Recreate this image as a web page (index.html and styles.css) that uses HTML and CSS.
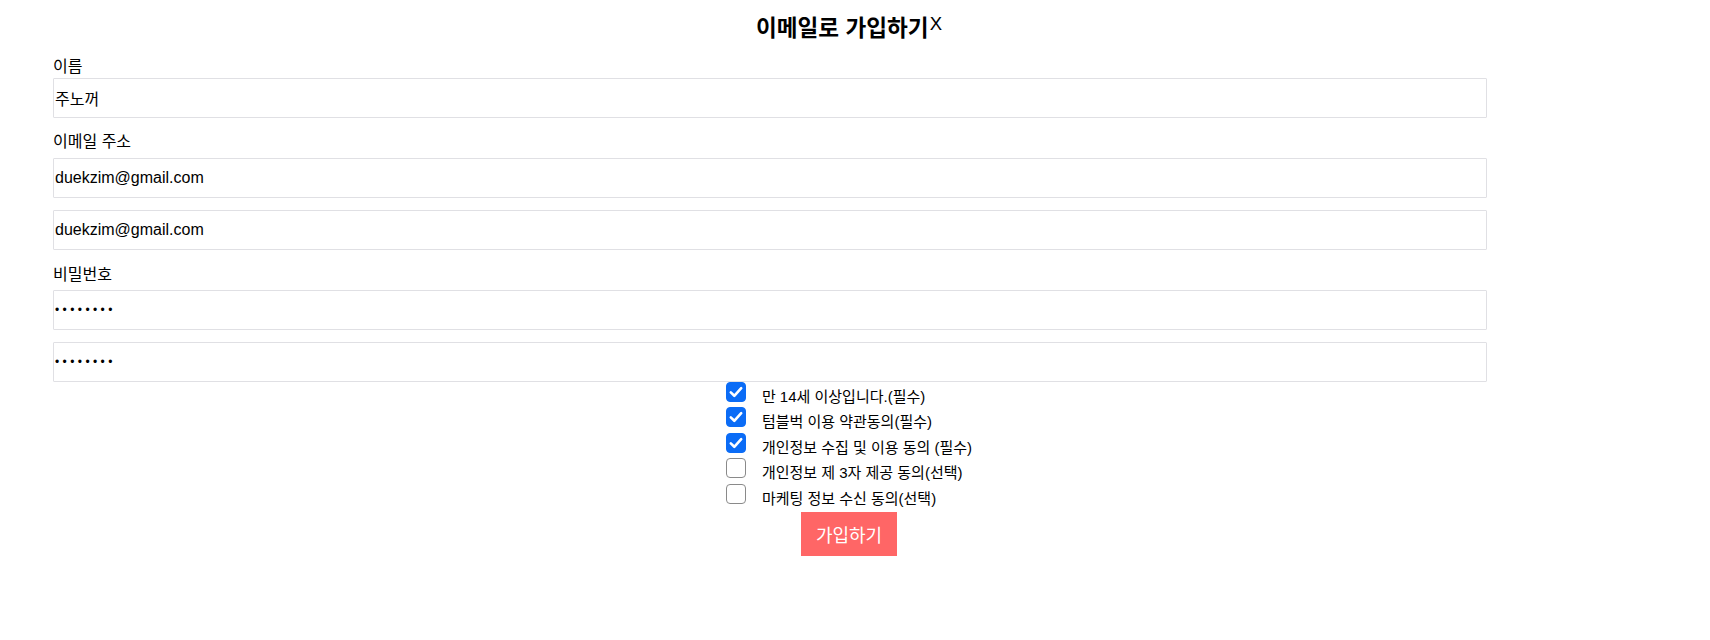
FILE: index.html
```html
<!DOCTYPE html>
<html lang="ko">
<head>
<meta charset="utf-8">
<title>이메일로 가입하기</title>
<link rel="stylesheet" href="styles.css">
</head>
<body>
<div class="page">
  <h2 class="title"><span class="title-text">이메일로 가입하기</span><span class="close">X</span></h2>
  <form class="form">
    <label class="label label-name" for="name">이름</label>
    <input class="field f-name" id="name" type="text" value="주노꺼">
    <label class="label label-email" for="email">이메일 주소</label>
    <input class="field f-email" id="email" type="text" value="duekzim@gmail.com">
    <input class="field f-email2" type="text" value="duekzim@gmail.com">
    <label class="label label-pw" for="pw">비밀번호</label>
    <input class="field pw f-pw" id="pw" type="password" value="12345678">
    <input class="field pw f-pw2" type="password" value="12345678">
  </form>
  <div class="checks">
    <label class="check-row"><input class="cb" type="checkbox" checked><span class="check-text">만 14세 이상입니다.(필수)</span></label>
    <label class="check-row"><input class="cb" type="checkbox" checked><span class="check-text">텀블벅 이용 약관동의(필수)</span></label>
    <label class="check-row"><input class="cb" type="checkbox" checked><span class="check-text">개인정보 수집 및 이용 동의 (필수)</span></label>
    <label class="check-row"><input class="cb" type="checkbox"><span class="check-text">개인정보 제 3자 제공 동의(선택)</span></label>
    <label class="check-row"><input class="cb" type="checkbox"><span class="check-text">마케팅 정보 수신 동의(선택)</span></label>
  </div>
  <div class="submit-wrap">
    <button class="submit" type="button">가입하기</button>
  </div>
</div>
</body>
</html>
```
FILE: styles.css
```css
html, body {
  margin: 0;
  padding: 0;
  background: #fff;
}
body {
  font-family: "Liberation Sans", "Noto Sans CJK KR", sans-serif;
  color: #000;
  font-size: 16px;
}
.page {
  width: 1682px;
  margin-left: 8px;
}
.title {
  display: flex;
  justify-content: center;
  align-items: flex-start;
  height: 32px;
  margin: 10.8px 0 0;
  font-weight: 700;
}
.title-text {
  font-family: "Noto Sans CJK KR", sans-serif;
  font-size: 22.6px;
  line-height: 32px;
}
.close {
  font-family: "Liberation Sans", sans-serif;
  font-weight: 400;
  font-size: 18.5px;
  line-height: 32px;
  margin-top: -3px;
  margin-left: 1px;
}
.form {
  margin-left: 45px;
  width: 1434px;
}
.label {
  display: block;
  height: 20px;
  font-family: "Noto Sans CJK KR", sans-serif;
  font-size: 16px;
  line-height: 20px;
}
.label-name { margin: 12.6px 0 2.6px; }
.label-email { margin: 12.5px 0 7.5px; }
.label-pw { margin: 12.7px 0 7.3px; }
.field {
  display: block;
  box-sizing: border-box;
  width: 100%;
  height: 40px;
  margin: 0;
  padding: 0 1px;
  border: 1px solid #e0e0e4;
  border-radius: 1px;
  font-family: "Liberation Sans", "Noto Sans CJK KR", sans-serif;
  font-size: 16px;
  color: #000;
  background: #fff;
  outline: none;
}
.f-email, .f-pw { margin-bottom: 12px; }
.pw {
  font-size: 12px;
  letter-spacing: 3.4px;
}
.checks {
  width: fit-content;
  margin: 0 auto;
}
.check-row {
  display: flex;
  align-items: flex-start;
  height: 25.5px;
}
.cb {
  appearance: none;
  -webkit-appearance: none;
  box-sizing: border-box;
  width: 20px;
  height: 20px;
  margin: 0;
  border: 1px solid #8a8a8a;
  border-radius: 4px;
  background: #fff;
  flex: none;
}
.cb:checked {
  border-color: #0b6cf6;
  background: #0b6cf6 url("data:image/svg+xml,%3Csvg xmlns='http://www.w3.org/2000/svg' viewBox='0 0 20 20'%3E%3Cpath d='M4.8 10.4 L8.3 13.8 L15.2 6.2' fill='none' stroke='white' stroke-width='2.6' stroke-linecap='round' stroke-linejoin='round'/%3E%3C/svg%3E") center / 20px 20px no-repeat;
}
.check-text {
  margin-left: 16px;
  padding-top: 5px;
  height: 20px;
  font-size: 15px;
  line-height: 20px;
  white-space: nowrap;
}
.submit-wrap {
  display: flex;
  justify-content: center;
  margin-top: 2.5px;
}
.submit {
  width: 96px;
  height: 44px;
  border: none;
  border-radius: 0;
  padding: 0;
  background: #ff6666;
  color: #fff;
  font-family: "Noto Sans CJK KR", sans-serif;
  font-size: 18px;
}
```
